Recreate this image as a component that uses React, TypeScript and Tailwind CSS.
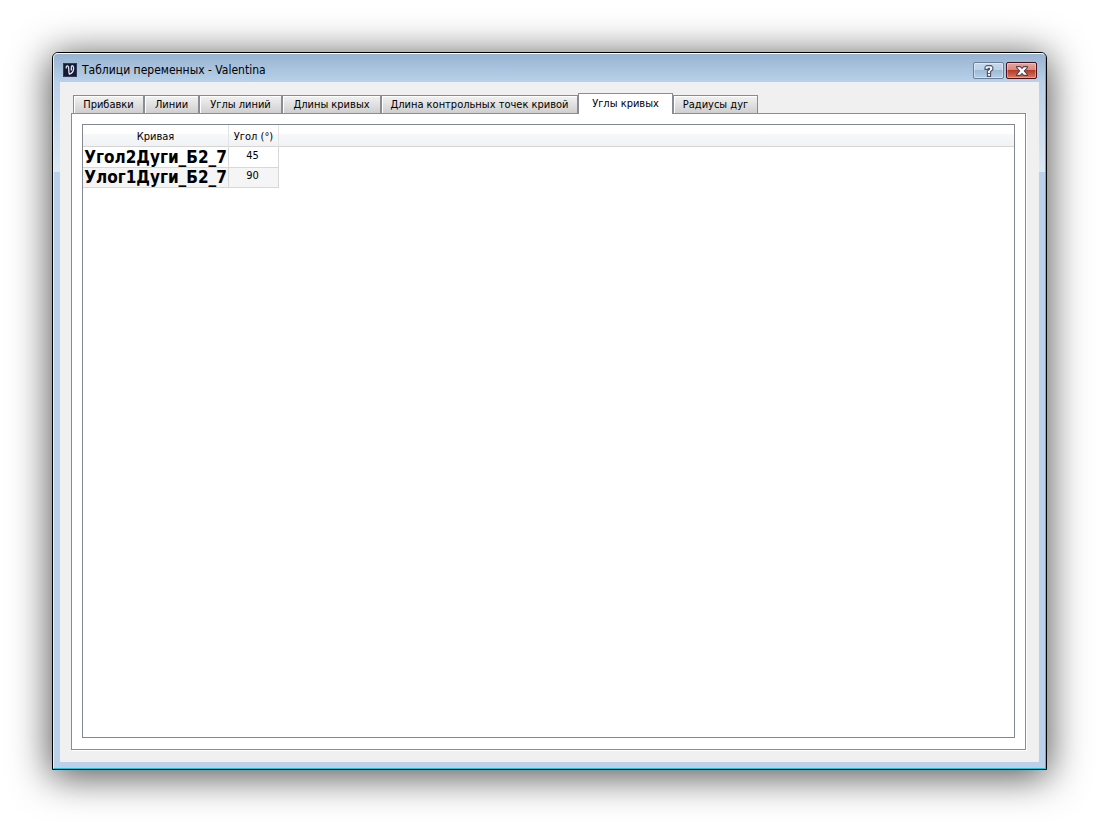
import { useState } from "react";

const tabs = [
  { label: "Прибавки", width: "w-[71px]" },
  { label: "Линии", width: "w-[55px]" },
  { label: "Углы линий", width: "w-[83px]" },
  { label: "Длины кривых", width: "w-[99px]" },
  { label: "Длина контрольных точек кривой", width: "w-[197px]" },
  { label: "Углы кривых", width: "w-[95px]" },
  { label: "Радиусы дуг", width: "w-[85px]" },
];

const rows = [
  { name: "Угол2Дуги_Б2_7", angle: 45 },
  { name: "Улог1Дуги_Б2_7", angle: 90 },
];

function AppIcon() {
  return (
    <svg className="mt-px h-[14px] w-[14px]" viewBox="0 0 14 14" aria-hidden="true">
      <rect width="14" height="14" fill="#141a33" />
      <rect x="0.5" y="0.5" width="13" height="13" fill="none" stroke="#30395a" />
      <path
        d="M3.4 5.4C2.6 3.4 4.6 1.8 5.4 3.8C6.2 6 5.4 9.6 6.4 11.2C8.4 10.6 10.4 8.4 10.6 5.6C10.7 3.6 9.8 2.4 8.8 2.8C7.8 3.4 8.4 5.4 8.4 7.4"
        fill="none"
        stroke="#dfe3f0"
        strokeWidth="1.3"
      />
    </svg>
  );
}

function HelpIcon() {
  return (
    <svg className="h-[12px] w-[10px]" viewBox="0 0 10 12" aria-hidden="true">
      <path
        d="M1 4.4V2.2L2.8 0.6H7.2L8.8 2.2V4.8L6.6 6.6V11.4H3.4V6L5.6 4.2V3.4H4.2V4.4Z"
        fill="#fff"
        stroke="#4c5666"
        strokeWidth="1.1"
      />
      <path d="M3.4 8.4H6.6" stroke="#4c5666" />
    </svg>
  );
}

function CloseIcon() {
  return (
    <svg className="h-[10px] w-[12px]" viewBox="0 0 12 10" aria-hidden="true">
      <path
        d="M0.6 0.6H4.3L6 2.4L7.7 0.6H11.4V1.6L8.3 5L11.4 8.4V9.4H7.7L6 7.6L4.3 9.4H0.6V8.4L3.7 5L0.6 1.6Z"
        fill="#fff"
        stroke="#4f4555"
        strokeWidth="1.1"
      />
    </svg>
  );
}

export default function App() {
  const [active, setActive] = useState(5);

  return (
    <div className="flex h-screen bg-white p-[52px] font-['Tahoma','DejaVu_Sans_Condensed','DejaVu_Sans',sans-serif] text-[11px] leading-[14px] text-black">
      <div className="flex min-w-0 flex-1 flex-col rounded-t-md border border-black bg-[#b9d1ea] shadow-[0_5px_38px_2px_rgba(0,0,0,0.68)]">
        <div className="flex min-h-0 flex-1 flex-col rounded-t-[5px] border border-t-white border-r-[#35c5e0] border-b-[#1fc3dc] border-l-[#e6f1fa]">
          <header className="flex h-7 shrink-0 items-start rounded-t bg-linear-to-b from-[#98b4d2] to-[#b9d1ea] pt-2 pr-2 pl-[9px]">
            <AppIcon />
            <h1 className="ml-[5px] flex-1 text-xs leading-4">Таблици переменных - Valentina</h1>
            <div className="flex gap-[2px]">
              <button
                type="button"
                aria-label="Справка"
                className="flex h-[17px] w-[31px] items-center justify-center rounded-[2px] border border-[#6b7f9a] bg-[linear-gradient(#c5d8eb_0%,#bdd2e8_48%,#9dbad7_50%,#b7cfe8_100%)] shadow-[inset_0_0_0_1px_rgba(255,255,255,0.4)]"
              >
                <HelpIcon />
              </button>
              <button
                type="button"
                aria-label="Закрыть"
                className="flex h-[17px] w-[31px] items-center justify-center rounded-[2px] border border-[#43101c] bg-[linear-gradient(#e5a69c_0%,#d98679_48%,#b93a26_50%,#d47a5f_100%)] shadow-[inset_0_0_0_1px_rgba(255,255,255,0.35)]"
              >
                <CloseIcon />
              </button>
            </div>
          </header>

          <div className="flex min-h-0 flex-1 bg-[linear-gradient(#b9d1ea,#dce9f6)] bg-[length:100%_90px] bg-no-repeat px-[6px] pb-[6px]">
            <main className="flex min-w-0 flex-1 flex-col bg-[#f0f0f0] pt-[11px] pr-[13px] pb-3 pl-[11px]">
              <div role="tablist" className="flex h-5 shrink-0 items-end pl-[2px]">
                {tabs.map((tab, i) => (
                  <button
                    key={tab.label}
                    type="button"
                    role="tab"
                    id={`tab-${i}`}
                    aria-selected={i === active}
                    onClick={() => setActive(i)}
                    className={`${tab.width} shrink-0 whitespace-nowrap border border-[#898c95] ${
                      i === active
                        ? "relative -mb-px h-[21px] border-b-0 bg-white"
                        : "h-[18px] border-b-0 bg-linear-to-b from-[#f2f2f2] to-[#cfcfcf] pt-px shadow-[inset_1px_1px_0_#fff]"
                    }`}
                  >
                    {tab.label}
                  </button>
                ))}
              </div>

              <section
                role="tabpanel"
                aria-labelledby={`tab-${active}`}
                className="flex min-h-0 flex-1 border border-[#898c95] bg-white px-[10px] pt-[10px] pb-[11px] shadow-[1px_1px_0_#fff]"
              >
                <div className="flex-1 overflow-hidden border border-[#828790]">
                  <div className="h-[22px] border-b border-[#d5d5d5] bg-[linear-gradient(#fff_44%,#f7f8fa_44%,#f1f2f4)]">
                    <table className="w-[196px] table-fixed border-separate border-spacing-0 text-center">
                      <thead>
                        <tr className="h-[22px]">
                          <th className="w-[146px] border-r border-b border-r-[#e2e4e7] border-b-[#d5d5d5] p-0 pt-[3px] font-normal">
                            Кривая
                          </th>
                          <th className="border-r border-b border-r-[#e2e4e7] border-b-[#d5d5d5] p-0 pt-[3px] font-normal">
                            Угол (°)
                          </th>
                        </tr>
                      </thead>
                      <tbody>
                        {rows.map((row) => (
                          <tr key={row.name} className="h-5 bg-white first:h-[21px] even:bg-[#f5f5f5]">
                            <td className="border-r border-b border-[#d8d8d8] p-0 align-bottom text-[17px] leading-[19px] font-bold whitespace-nowrap">
                              {row.name}
                            </td>
                            <td className="border-r border-b border-[#d8d8d8] p-0 pr-[2px] pb-[3px] align-bottom leading-4">
                              {row.angle}
                            </td>
                          </tr>
                        ))}
                      </tbody>
                    </table>
                  </div>
                </div>
              </section>
            </main>
          </div>
        </div>
      </div>
    </div>
  );
}
